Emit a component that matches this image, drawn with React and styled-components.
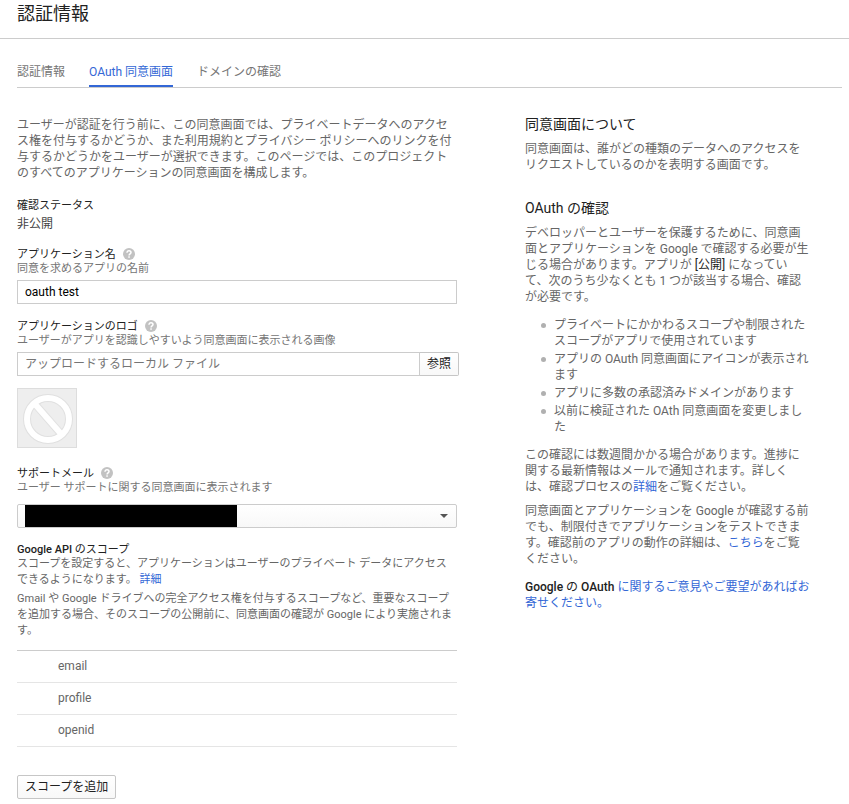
import React from 'react';
import styled, { createGlobalStyle } from 'styled-components';

const scopes = ['email', 'profile', 'openid'];

const HelpIcon = () => (
  <HelpSvg viewBox="0 0 12 12" aria-hidden="true">
    <circle cx="6" cy="6" r="6" fill="#c2c2c2" />
    <path
      d="M4 4.8C4 3.5 4.9 2.8 6 2.8s2 .7 2 1.8c0 1.3-1.9 1.4-1.9 2.8"
      fill="none"
      stroke="#fff"
      strokeWidth="1.5"
    />
    <rect x="5.3" y="8.3" width="1.5" height="1.5" fill="#fff" />
  </HelpSvg>
);

const Field = ({ id, label, hint, children }) => (
  <FieldGroup>
    <FieldLabel htmlFor={id}>
      {label}
      <HelpIcon />
    </FieldLabel>
    <Hint>{hint}</Hint>
    {children}
  </FieldGroup>
);

const App = () => {
  return (
    <>
      <GlobalStyle />
      <Header>
        <h1>認証情報</h1>
      </Header>
      <Content>
        <Tabs>
          <Tab href="#credentials">認証情報</Tab>
          <Tab href="#consent" $active aria-current="page">OAuth 同意画面</Tab>
          <Tab href="#domain">ドメインの確認</Tab>
        </Tabs>
        <Columns>
          <ConsentForm onSubmit={(e) => e.preventDefault()}>
            <Intro>
              ユーザーが認証を行う前に、この同意画面では、プライベートデータへのアクセス権を付与するかどうか、また利用規約とプライバシー ポリシーへのリンクを付与するかどうかをユーザーが選択できます。このページでは、このプロジェクトのすべてのアプリケーションの同意画面を構成します。
            </Intro>

            <Status>
              <dt>確認ステータス</dt>
              <dd>非公開</dd>
            </Status>

            <Field id="app-name" label="アプリケーション名" hint="同意を求めるアプリの名前">
              <TextInput id="app-name" type="text" defaultValue="oauth test" />
            </Field>

            <Field
              id="app-logo"
              label="アプリケーションのロゴ"
              hint="ユーザーがアプリを認識しやすいよう同意画面に表示される画像"
            >
              <FileRow>
                <TextInput id="app-logo" type="text" placeholder="アップロードするローカル ファイル" />
                <BrowseButton type="button">参照</BrowseButton>
              </FileRow>
              <LogoPreview>
                <svg viewBox="0 0 58 58" aria-hidden="true">
                  <g fill="none" stroke="#e0e0e0" strokeWidth="8">
                    <circle cx="30" cy="30" r="21" />
                    <path d="M17 15L43 45" />
                  </g>
                  <g fill="none" stroke="#fff" strokeWidth="6">
                    <circle cx="30" cy="30" r="21" />
                    <path d="M16 14L44 46" />
                  </g>
                </svg>
              </LogoPreview>
            </Field>

            <Field
              id="support-mail"
              label="サポートメール"
              hint="ユーザー サポートに関する同意画面に表示されます"
            >
              <SelectBox>
                <select id="support-mail" />
                <Redaction />
                <svg viewBox="0 0 8 4" aria-hidden="true">
                  <path d="M0 0h8L4 4z" fill="#555" />
                </svg>
              </SelectBox>
            </Field>

            <ScopeSection>
              <h2><Medium>Google API</Medium> のスコープ</h2>
              <p>
                スコープを設定すると、アプリケーションはユーザーのプライベート データにアクセスできるようになります。 <Link href="#scopes">詳細</Link>
              </p>
              <p>
                Gmail や Google ドライブへの完全アクセス権を付与するスコープなど、重要なスコープを追加する場合、そのスコープの公開前に、同意画面の確認が Google により実施されます。
              </p>
            </ScopeSection>
            <ScopeList>
              {scopes.map((scope) => (
                <li key={scope}>{scope}</li>
              ))}
            </ScopeList>
            <AddButton type="button">スコープを追加</AddButton>
          </ConsentForm>

          <Aside>
            <h2>同意画面について</h2>
            <p>同意画面は、誰がどの種類のデータへのアクセスをリクエストしているのかを表明する画面です。</p>

            <h2>OAuth の確認</h2>
            <p>
              デベロッパーとユーザーを保護するために、同意画面とアプリケーションを Google で確認する必要が生じる場合があります。アプリが <Dark>[公開]</Dark> になっていて、次のうち少なくとも 1 つが該当する場合、確認が必要です。
            </p>
            <BulletList>
              <li>プライベートにかかわるスコープや制限されたスコープがアプリで使用されています</li>
              <li>アプリの OAuth 同意画面にアイコンが表示されます</li>
              <li>アプリに多数の承認済みドメインがあります</li>
              <li>以前に検証された OAth 同意画面を変更しました</li>
            </BulletList>
            <p>
              この確認には数週間かかる場合があります。進捗に関する最新情報はメールで通知されます。詳しくは、確認プロセスの<Link href="#process">詳細</Link>をご覧ください。
            </p>
            <p>
              同意画面とアプリケーションを Google が確認する前でも、制限付きでアプリケーションをテストできます。確認前のアプリの動作の詳細は、<Link href="#unverified">こちら</Link>をご覧ください。
            </p>
            <Feedback>
              <Dark>
                <Medium>Google</Medium> の <Medium>OAuth</Medium>
              </Dark>{' '}
              <Link href="#feedback">に関するご意見やご要望があればお寄せください。</Link>
            </Feedback>
          </Aside>
        </Columns>
      </Content>
    </>
  );
};

export default App;

const GlobalStyle = createGlobalStyle`
  * {
    box-sizing: border-box;
  }

  body {
    margin: 0;
    background: #fff;
    color: #666;
    font-family: Roboto, 'Noto Sans CJK JP', sans-serif;
    font-size: 12px;
    line-height: 16px;
  }

  h1, h2, p, ul, dl, dd {
    margin: 0;
    padding: 0;
    font-weight: 400;
  }

  ul {
    list-style: none;
  }

  input, button, select {
    font: inherit;
  }
`;

const Header = styled.header`
  padding: 2px 17px 12px;
  border-bottom: 1px solid #ccc;

  h1 {
    color: #212121;
    font-size: 18px;
    line-height: 24px;
  }
`;

const Content = styled.main`
  padding: 0 7px 5px 17px;
`;

const Tabs = styled.nav`
  display: flex;
  gap: 24px;
  padding-top: 25px;
  border-bottom: 1px solid #ccc;
`;

const Tab = styled.a`
  padding-bottom: 5px;
  border-bottom: 2px solid ${({ $active }) => ($active ? '#3367d6' : 'transparent')};
  color: ${({ $active }) => ($active ? '#3367d6' : '#757575')};
  text-decoration: none;
`;

const Columns = styled.div`
  display: flex;
  gap: 68px;
  padding-top: 28px;
`;

const ConsentForm = styled.form`
  flex: 0 1 440px;
  min-width: 0;
  padding-top: 1px;
`;

const Intro = styled.p`
  margin-bottom: 17px;
`;

const Status = styled.dl`
  margin-bottom: 16px;

  dt {
    color: #212121;
    font-size: 11px;
  }

  dd {
    margin-top: 2px;
    color: #424242;
  }
`;

const FieldGroup = styled.div`
  margin-bottom: 16px;
`;

const FieldLabel = styled.label`
  display: flex;
  align-items: flex-start;
  gap: 7px;
  color: #212121;
  font-size: 11px;
  line-height: 14px;
`;

const HelpSvg = styled.svg`
  width: 12px;
  height: 12px;
`;

const Hint = styled.p`
  margin-bottom: 4px;
  color: #757575;
  font-size: 11px;
  line-height: 14px;
`;

const TextInput = styled.input`
  display: block;
  width: 100%;
  height: 24px;
  padding: 0 7px;
  border: 1px solid #ccc;
  background: #fff;
  color: #000;

  &::placeholder {
    color: #757575;
    opacity: 1;
  }
`;

const FileRow = styled.div`
  display: flex;
  width: calc(100% + 2px);
`;

const Button = styled.button`
  height: 24px;
  padding: 0 7px;
  border: 1px solid #c6c6c6;
  border-radius: 2px;
  background: linear-gradient(#fff, #f8f8f8);
  color: #212121;
  white-space: nowrap;
`;

const BrowseButton = styled(Button)`
  border-left: 0;
  border-radius: 0 2px 2px 0;
`;

const AddButton = styled(Button)`
  margin-top: 28px;
`;

const LogoPreview = styled.div`
  width: 60px;
  height: 60px;
  margin: 12px 0 19px;
  border: 1px solid #ddd;
  background: #eee;

  svg {
    display: block;
  }
`;

const SelectBox = styled.div`
  position: relative;
  margin-top: 9px;

  select {
    display: block;
    width: 100%;
    height: 24px;
    border: 1px solid #ccc;
    border-radius: 2px;
    background: linear-gradient(#fff, #f8f8f8);
    appearance: none;
  }

  svg {
    position: absolute;
    top: 10px;
    right: 9px;
    width: 8px;
    height: 4px;
    pointer-events: none;
  }
`;

const Redaction = styled.span`
  position: absolute;
  top: 1px;
  left: 8px;
  width: 212px;
  height: 22px;
  background: #000;
  pointer-events: none;
`;

const ScopeSection = styled.section`
  margin-bottom: 11px;
  font-size: 11px;

  h2 {
    color: #212121;
    font-size: 11px;
    line-height: 12px;
  }

  p + p {
    margin-top: 3px;
  }
`;

const ScopeList = styled.ul`
  border-top: 1px solid #ccc;

  li {
    padding: 7px 41px 8px;
    border-bottom: 1px solid #e5e5e5;
  }
`;

const Link = styled.a`
  color: #3367d6;
  text-decoration: none;
`;

const Medium = styled.span`
  font-weight: 500;
`;

const Aside = styled.aside`
  flex: 0 1 285px;
  min-width: 0;

  h2 {
    margin-bottom: 9px;
    color: #212121;
    font-size: 14px;
    line-height: 16px;
  }

  p + h2 {
    margin-top: 27px;
  }

  p + p {
    margin-top: 8px;
  }
`;

const Dark = styled.span`
  color: #212121;
`;

const BulletList = styled.ul`
  display: flex;
  flex-direction: column;
  gap: 2px;
  margin: 12px 0;
  padding-left: 16px;

  li {
    display: grid;
    grid-template-columns: 5px 1fr;
    gap: 8px;
  }

  li::before {
    content: '';
    height: 5px;
    margin-top: 6px;
    border-radius: 50%;
    background: #b0b0b0;
  }
`;

const Feedback = styled.p`
  padding-top: 4px;
`;
